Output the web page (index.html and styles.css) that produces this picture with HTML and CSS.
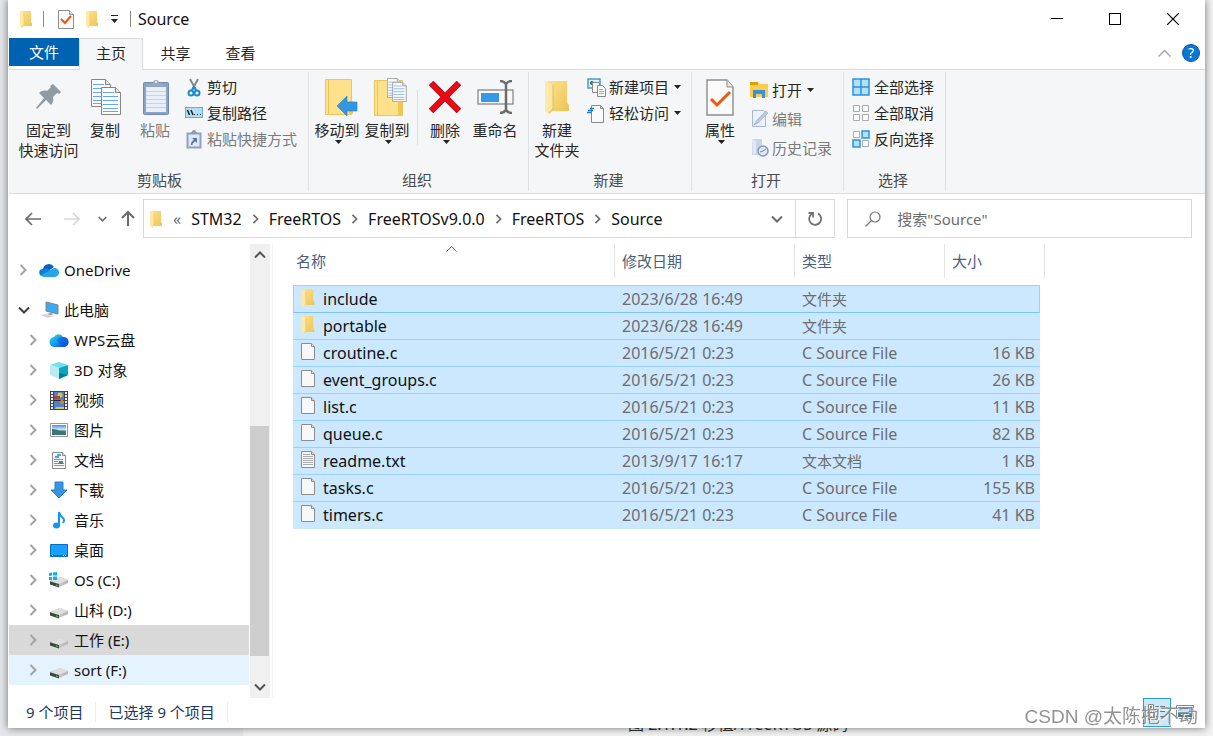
FILE: index.html
```html
<!DOCTYPE html>
<html lang="zh-CN">
<head>
<meta charset="utf-8">
<title>Source</title>
<link rel="stylesheet" href="styles.css">
</head>
<body>
<svg class="defs" aria-hidden="true">
  <defs>
    <linearGradient id="gf" x1="0" y1="0" x2="1" y2="1"><stop offset="0" stop-color="#ffe28f"/><stop offset="1" stop-color="#edc455"/></linearGradient>
    <linearGradient id="gd" x1="0" y1="0" x2="1" y2="0"><stop offset="0" stop-color="#8a8a8a"/><stop offset=".4" stop-color="#c9c9c9"/><stop offset="1" stop-color="#b4b4b4"/></linearGradient>
    <linearGradient id="gw" x1="0" y1="0" x2="1" y2="1"><stop offset="0" stop-color="#2ee0c0"/><stop offset=".5" stop-color="#159bf5"/><stop offset="1" stop-color="#0a3fe0"/></linearGradient>
    <linearGradient id="gp" x1="0" y1="0" x2="0" y2="1"><stop offset="0" stop-color="#4a8fe0"/><stop offset=".45" stop-color="#cfe6f7"/><stop offset=".6" stop-color="#5d8a7c"/><stop offset="1" stop-color="#3c6ea0"/></linearGradient>
    <symbol id="folder" viewBox="0 0 14 18"><path d="M2 1h10v11l1 1v3H3z" fill="url(#gf)"/><path d="M1 1l4 2v12l-2 3-2-2z" fill="#ffe9a8"/><path d="M5 3v12l-2 2" fill="none" stroke="#e9c25a" stroke-width=".6"/></symbol>
    <symbol id="file" viewBox="0 0 16 19"><path d="M1.500 1.500h10l3 3v13h-13z" fill="#f8f8f8" stroke="#8c8c8c"/><path d="M11.500 1.500v3h3" fill="#ddd" stroke="#8c8c8c"/></symbol>
    <symbol id="text" viewBox="0 0 16 19"><path d="M1.500 1.500h10l3 3v13h-13z" fill="#f8f8f8" stroke="#8c8c8c"/><path d="M11.500 1.500v3h3" fill="#ddd" stroke="#8c8c8c"/><path d="M3 4.500h7M3 6.500h10M3 8.500h10M3 10.500h10M3 12.500h10M3 14.500h10" stroke="#aaa"/></symbol>
    <symbol id="check" viewBox="0 0 28 37"><path d="M1 1h20l6 7v28H1z" fill="#fafafa" stroke="#8e8e8e" stroke-width="1.400"/><path d="M21 1v7h6" fill="#e6e6e6" stroke="#8e8e8e"/><path d="M5 20l6 6L24 13" fill="none" stroke="#f0570e" stroke-width="3"/></symbol>
    <symbol id="page" viewBox="0 0 20 28"><path d="M.500.500h14l5 5v22H.500z" fill="#fbfbfb" stroke="#858585"/><path d="M14.500.500v5h5" fill="#e4e4e4" stroke="#858585"/><path d="M2 5.500h11M2 9.500h15M2 13.500h15M2 17.500h15M2 21.500h15M2 24.500h15" stroke="#6aa5ee"/></symbol>
    <symbol id="next" viewBox="0 0 8 12"><path d="M1.500 1l5 5-5 5" fill="none" stroke="currentColor" stroke-width="2"/></symbol>
    <symbol id="down" viewBox="0 0 12 8"><path d="M1 1.500l5 5 5-5" fill="none" stroke="currentColor" stroke-width="2"/></symbol>
    <symbol id="drop" viewBox="0 0 7 4"><path d="M0 0h7L3.500 4z" fill="#222"/></symbol>
    <symbol id="drive" viewBox="0 0 20 12"><path d="M1 5l10-4 8 3v3l-9 4-9-3z" fill="url(#gd)"/><path d="M1 5l10-4 8 3-9 4z" fill="#dedede"/><path d="M1 5.500l9 2.500v3.500l-9-3z" fill="#3f4542"/><path d="M7 8.500l2 .500v1l-2-.500z" fill="#39e04b"/></symbol>
  </defs>
</svg>

<div class="backdrop" aria-hidden="true"><p class="behind">图 2.1.1.2 移植/FreeRTOS 源码</p></div>

<main class="window">
  <header class="titlebar">
    <svg class="ic-folder" aria-hidden="true"><use href="#folder"/></svg>
    <span class="bar"></span>
    <button class="quick" aria-label="属性"><svg width="16" height="19" viewBox="0 0 16 19"><path d="M.500.500h11l4 4v14H.500z" fill="#fafafa" stroke="#8e8e8e"/><path d="M11.500.500v4h4" fill="#e6e6e6" stroke="#8e8e8e"/><path d="M3 9l4 4 6-7" fill="none" stroke="#f0570e" stroke-width="2"/></svg></button>
    <button class="quick" aria-label="新建文件夹"><svg class="ic-folder"><use href="#folder"/></svg></button>
    <button class="quick more" aria-label="自定义快速访问工具栏"><svg width="7" height="8"><path d="M0 .500h7" stroke="#222"/><path d="M0 4h7L3.500 8z" fill="#222"/></svg></button>
    <span class="bar title-bar"></span>
    <h1>Source</h1>
    <div class="winbtns">
      <button aria-label="最小化"><svg width="12" height="12"><path d="M0 5.500h12" stroke="#000"/></svg></button>
      <button aria-label="最大化"><svg width="12" height="12"><rect x=".500" y=".500" width="11" height="11" fill="none" stroke="#000"/></svg></button>
      <button aria-label="关闭"><svg width="12" height="12"><path d="M0 0l12 12M12 0L0 12" stroke="#000" stroke-width="1.200"/></svg></button>
    </div>
  </header>

  <nav class="tabs">
    <button class="file-tab">文件</button>
    <button class="active">主页</button>
    <button>共享</button>
    <button>查看</button>
    <div class="tab-end">
      <button aria-label="最小化功能区"><svg width="13" height="8"><path d="M.500 7.500l6-6 6 6" fill="none" stroke="#a8a8a8" stroke-width="1.500"/></svg></button>
      <button class="help" aria-label="帮助">?</button>
    </div>
  </nav>

  <section class="ribbon">
    <div class="group clip">
      <div class="tools">
        <button class="big wide"><span class="pic"><svg width="26" height="28"><path d="M17 1l8 8-2 2-2-1-4 4c1 3 0 6-2 8l-5-5-9 9-1-1 8-10-5-5c2-2 5-3 8-2l4-4-1-1z" fill="#8f9aa3"/></svg></span>固定到<br>快速访问</button>
        <button class="big"><span class="pic copy"><svg width="32" height="38"><svg x="1" y="1" width="20" height="28"><use href="#page"/></svg><svg x="11" y="9" width="20" height="28"><use href="#page"/></svg></svg></span>复制</button>
        <button class="big off"><span class="pic copy"><svg width="28" height="38"><rect x="1.500" y="4.500" width="25" height="32" rx="1" fill="#8ba1c7" stroke="#7188b3"/><path d="M4 9h20v25H4z" fill="#e9eff9"/><path d="M4 13.500h20M4 17.500h20M4 21.500h20M4 25.500h20M4 29.500h20" stroke="#c5d3eb"/><path d="M7 5h4a3 3 0 0 1 6 0h4l2 3H5z" fill="#9da8bb"/><circle cx="14" cy="4" r="1" fill="#fff"/></svg></span>粘贴</button>
        <div class="list">
          <button><svg width="18" height="19"><path d="M5 1l6 11M13 1L7 12" stroke="#888" stroke-width="2"/><circle cx="6" cy="15" r="2.500" fill="none" stroke="#1c8bcb" stroke-width="2"/><circle cx="12" cy="15" r="2.500" fill="none" stroke="#1c8bcb" stroke-width="2"/><path d="M7 12l2-3 2 3" fill="none" stroke="#1c8bcb" stroke-width="2"/></svg>剪切</button>
          <button><svg width="18" height="12"><rect x=".500" y=".500" width="17" height="10" fill="#b2dff7" stroke="#6aabd6"/><path d="M2.500 3l2 5M6 3l2 5" stroke="#222" stroke-width="1.500"/><path d="M9 7.500h1M12 7.500h1M15 7.500h1" stroke="#222"/></svg>复制路径</button>
          <button class="off"><svg width="18" height="19"><rect x="2.500" y="3.500" width="13" height="14" fill="#dfe7f4" stroke="#8ea1c4" stroke-width="2"/><path d="M6 4V2h1a2 2 0 0 1 4 0h1v2z" fill="#8c9ab3"/><path d="M6 15c0-3 1-4 3-5L7 8h5v5l-1.500-1.500C8.500 12 7.500 13 7.500 15z" fill="#5875ab"/></svg>粘贴快捷方式</button>
        </div>
      </div>
      <p>剪贴板</p>
    </div>
    <div class="group organize">
      <div class="tools">
        <button class="big"><span class="pic push"><svg width="34" height="38"><path d="M1.500 1.500h26v35h-26z" fill="#ffe18b" stroke="#ebc55b"/><path d="M4.500 2v34" stroke="#ebc55b"/><path d="M25 23h4v13h-4z" fill="#edc558"/><path d="M13 28l10-10v6h10v9H23v5z" fill="#3496e3" stroke="#2a7fc9" stroke-width=".600"/></svg></span>移动到<svg class="arrow"><use href="#drop"/></svg></button>
        <button class="big"><span class="pic push"><svg width="36" height="40"><path d="M1.500 3.500h28v35h-28z" fill="#ffe18b" stroke="#ebc55b"/><path d="M4.500 4v34" stroke="#ebc55b"/><path d="M25 26q3-3 4 0v13h-4z" fill="#edc558"/><svg x="14" y="1" width="14" height="20"><use href="#page"/></svg><svg x="19" y="5" width="15" height="20"><use href="#page"/></svg></svg></span>复制到<svg class="arrow"><use href="#drop"/></svg></button>
        <span class="split"></span>
        <button class="big"><span class="pic"><svg width="32" height="32"><path d="M2 2l28 28M30 2L2 30" stroke="#a8121c" stroke-width="6.500"/><path d="M2.500 2.500l27 27M29.500 2.500l-27 27" stroke="#e90a15" stroke-width="5"/></svg></span>删除<svg class="arrow"><use href="#drop"/></svg></button>
        <button class="big"><span class="pic"><svg width="37" height="34"><rect x="1" y="10" width="35" height="14" fill="#fafafa" stroke="#888" stroke-width="1.300"/><path d="M4 13h18v9H4z" fill="#3698e8"/><path d="M23 1q4 0 6 3q2-3 6-3M29 3v28M23 33q4 0 6-3q2 3 6 3" fill="none" stroke="#6d6d6d" stroke-width="2.500"/></svg></span>重命名</button>
      </div>
      <p>组织</p>
    </div>
    <div class="group create">
      <div class="tools">
        <button class="big"><span class="pic"><svg width="28" height="38"><use href="#folder"/></svg></span>新建<br>文件夹</button>
        <div class="list">
          <button><svg width="19" height="19"><rect x="1" y="1" width="12" height="9" fill="#d7efff" stroke="#4f9bc5" stroke-width="1.500"/><circle cx="5" cy="5" r="2" fill="#40705c"/><path d="M5.500 4.500h7v10h-7z" fill="#f7f7f7" stroke="#888"/><path d="M10.500 7.500h5l3 3v8h-8z" fill="#fafafa" stroke="#888"/><path d="M12 11.500h4M12 13.500h5M12 15.500h5" stroke="#d79797"/></svg>新建项目<svg class="inline-arrow"><use href="#drop"/></svg></button>
          <button><svg width="19" height="19"><path d="M4.500 1.500h9l3 3v14h-12z" fill="#fafafa" stroke="#888"/><path d="M13.500 1.500v3h3" fill="none" stroke="#888"/><path d="M3 4.500h4M1 6.500h5M0 8.500h4" stroke="#2679c2" stroke-width="1.500"/></svg>轻松访问<svg class="inline-arrow"><use href="#drop"/></svg></button>
        </div>
      </div>
      <p>新建</p>
    </div>
    <div class="group open">
      <div class="tools">
        <button class="big"><span class="pic"><svg width="28" height="37"><use href="#check"/></svg></span>属性<svg class="arrow"><use href="#drop"/></svg></button>
        <div class="list loose">
          <button><svg width="19" height="18"><path d="M0 1h8l2 2h8v13H0z" fill="#fbcd4a"/><path d="M0 1h8v3H0z" fill="#dda000"/><path d="M3 17V9h12v8h-3v-4H6v4z" fill="#3493df"/></svg>打开<svg class="inline-arrow"><use href="#drop"/></svg></button>
          <button class="off"><svg width="19" height="19"><path d="M2.500 1.500h11l2 2v14h-13z" fill="#eef2f8" stroke="#a8b6d0"/><path d="M4 16l2-4L16 2l2 2L8 14z" fill="#bccbe0" stroke="#93a5c5" stroke-width=".600"/></svg>编辑</button>
          <button class="off"><svg width="19" height="19"><path d="M2 1h10v16H2z" fill="#c8d4e7"/><path d="M2 1l4 2v12l-3 2z" fill="#e2e9f4"/><circle cx="13" cy="13" r="5" fill="#e0e7f1" stroke="#8298bd" stroke-width="1.500"/><path d="M13 13l3-2M13 13l-3 1" stroke="#7087b0"/></svg>历史记录</button>
        </div>
      </div>
      <p>打开</p>
    </div>
    <div class="group select">
      <div class="tools">
        <div class="list">
          <button><svg width="18" height="18"><path d="M1 1h16v16H1zM9 1v16M1 9h16" fill="#b5e0fb" stroke="#2993df" stroke-width="1.500"/></svg>全部选择</button>
          <button><svg width="18" height="18"><path d="M1.500 1.500h6v6h-6zM10.500 1.500h6v6h-6zM1.500 10.500h6v6h-6zM10.500 10.500h6v6h-6z" fill="#fafafa" stroke="#aaa"/></svg>全部取消</button>
          <button><svg width="18" height="18"><path d="M1.500 1.500h6v6h-6zM10.500 10.500h6v6h-6z" fill="#fafafa" stroke="#aaa"/><path d="M10 1h7v7h-7zM1 10h7v7H1z" fill="#b5e0fb" stroke="#2993df" stroke-width="1.500"/></svg>反向选择</button>
        </div>
      </div>
      <p>选择</p>
    </div>
  </section>

  <nav class="navigation">
    <button class="n1" aria-label="后退"><svg width="16" height="14"><path d="M7 1L1 7l6 6M1 7h15" fill="none" stroke="#6b6b6b" stroke-width="1.700"/></svg></button>
    <button class="n1" aria-label="前进"><svg width="16" height="14"><path d="M9 1l6 6-6 6M15 7H0" fill="none" stroke="#d7d7d7" stroke-width="1.700"/></svg></button>
    <button class="n2" aria-label="最近浏览的位置"><svg width="9" height="6"><use href="#down"/></svg></button>
    <button class="n2 up" aria-label="上移"><svg width="14" height="17"><path d="M1 8l6-6 6 6M7 2v14" fill="none" stroke="#6b6b6b" stroke-width="2"/></svg></button>
    <div class="address">
      <svg class="ic-folder" aria-hidden="true"><use href="#folder"/></svg>
      <span class="chevs">«</span>
      <a href="#">STM32</a><svg class="crumb"><use href="#next"/></svg>
      <a href="#">FreeRTOS</a><svg class="crumb"><use href="#next"/></svg>
      <a href="#">FreeRTOSv9.0.0</a><svg class="crumb"><use href="#next"/></svg>
      <a href="#">FreeRTOS</a><svg class="crumb"><use href="#next"/></svg>
      <a href="#">Source</a>
      <button class="history" aria-label="以前的位置"><svg width="12" height="8"><use href="#down"/></svg></button>
      <button class="refresh" aria-label="刷新"><svg width="16" height="16"><path d="M11 2.500a6 6 0 1 1-6.500.500" fill="none" stroke="#707070" stroke-width="1.800"/><path d="M1.500 2H6v4.500" fill="none" stroke="#707070" stroke-width="1.800"/></svg></button>
    </div>
    <label class="search"><svg width="16" height="16"><circle cx="10" cy="6" r="5" fill="none" stroke="#777" stroke-width="1.200"/><path d="M6.500 9.500L.500 15.500" stroke="#777" stroke-width="1.200"/></svg><input type="text" aria-label="搜索" placeholder="搜索&quot;Source&quot;"></label>
  </nav>

  <div class="content">
    <ul class="tree">
      <li class="root onedrive"><svg class="tw"><use href="#next"/></svg><span class="ti"><svg width="20" height="14"><path d="M4 6a6 6 0 0 1 11-2l-7 5-5 4a4 4 0 0 1 1-7z" fill="#0a62b8"/><path d="M5 6q4-2 7 2l-8 5a3.500 3.500 0 0 1-.500-7z" fill="#0f7fd9"/><path d="M15 5a4.500 4.500 0 0 1 1 9H5q-2 0-3-2l8-4z" fill="#28a5ea"/></svg></span>OneDrive</li>
      <li class="root"><svg class="tw open-tw"><use href="#down"/></svg><span class="ti"><svg width="20" height="18"><path d="M7 1l12 3v9L7 10z" fill="#3baaf0" stroke="#748390"/><path d="M1 14l6-1 8 2-6 2z" fill="#d2d6d9"/><path d="M11 12l4 1-3 1-4-1z" fill="#8c9499"/></svg></span>此电脑</li>
      <li><svg class="tw"><use href="#next"/></svg><span class="ti"><svg width="20" height="16"><path d="M5 5a5 5 0 0 1 9 0 5 5 0 0 1 1 10H6A5 5 0 0 1 5 5z" fill="url(#gw)"/><path d="M8 8a6 6 0 0 1 6-3 5 5 0 0 1 1 10q-4-1-7-7z" fill="#0b50e2" opacity=".6"/></svg></span>WPS云盘</li>
      <li><svg class="tw"><use href="#next"/></svg><span class="ti"><svg width="20" height="18"><path d="M1 4l9-3 9 3-9 3z" fill="#6ee2ee"/><path d="M1 4l9 3v11l-9-4z" fill="#bcebef"/><path d="M19 4l-9 3v11l9-4z" fill="#0ca4c4"/><path d="M10 12l9 2-9 4z" fill="#007e9c"/></svg></span>3D 对象</li>
      <li><svg class="tw"><use href="#next"/></svg><span class="ti"><svg width="18" height="19"><path d="M0 0h18v19H0z" fill="#444"/><path d="M4 1h10v17H4z" fill="#4f7ed2"/><path d="M2 1v17M16 1v17" stroke="#eee" stroke-width="2" stroke-dasharray="2 1"/><circle cx="10" cy="4" r="2.500" fill="#e8c13e"/><path d="M4 5h6v3H4z" fill="#9b4c4b"/><path d="M4 9.500h10" stroke="#252b38"/><circle cx="12" cy="11" r="2" fill="#d38738"/><path d="M6 16h8v2H5z" fill="#dac64c"/></svg></span>视频</li>
      <li><svg class="tw"><use href="#next"/></svg><span class="ti"><svg width="18" height="14"><path d="M.500.500h17v13H.500z" fill="#fff" stroke="#999"/><path d="M2 2h14v10H2z" fill="url(#gp)"/><path d="M2 6q5 0 8 2l6 1v3H2z" fill="#3f7574"/></svg></span>图片</li>
      <li><svg class="tw"><use href="#next"/></svg><span class="ti"><svg width="16" height="19"><use href="#file"/><path d="M6 4h4M4 6h4" stroke="#1688dd" stroke-width="1.500"/><path d="M3 8.500h9M3 10.500h4M3 12.500h10M3 14.500h10" stroke="#4ba3df"/><path d="M8 10h4v3H8z" fill="#487d9d"/></svg></span>文档</li>
      <li><svg class="tw"><use href="#next"/></svg><span class="ti"><svg width="18" height="18"><path d="M5 1h8v8h4l-8 8-8-8h4z" fill="#3496e3" stroke="#2a7fc9"/></svg></span>下载</li>
      <li><svg class="tw"><use href="#next"/></svg><span class="ti"><svg width="14" height="18"><ellipse cx="4.500" cy="14.500" rx="3.500" ry="3" fill="#1397ee"/><path d="M7 15V1q1 4 4 6 2 2 0 5" fill="none" stroke="#1397ee" stroke-width="2"/></svg></span>音乐</li>
      <li><svg class="tw"><use href="#next"/></svg><span class="ti"><svg width="18" height="13"><path d="M.500.500h17v12H.500z" fill="#16a0ff" stroke="#0870ba"/><path d="M1 11.500h16" stroke="#0871c2"/><path d="M2 11.500h1M13 11.500h1M15 11.500h1" stroke="#fff"/></svg></span>桌面</li>
      <li><svg class="tw"><use href="#next"/></svg><span class="ti"><svg width="20" height="16"><svg y="4" width="20" height="12"><use href="#drive"/></svg><path d="M0 1l3-.500v3L0 4zM4 .500L8 0v3.500H4zM0 5h3v3H0zM4 4.500h4V8H4z" fill="#05b5ef"/></svg></span>OS (C:)</li>
      <li><svg class="tw"><use href="#next"/></svg><span class="ti low"><svg width="20" height="12"><use href="#drive"/></svg></span>山科 (D:)</li>
      <li class="current"><svg class="tw"><use href="#next"/></svg><span class="ti low"><svg width="20" height="12"><use href="#drive"/></svg></span>工作 (E:)</li>
      <li class="hover"><svg class="tw"><use href="#next"/></svg><span class="ti low"><svg width="20" height="12"><use href="#drive"/></svg></span>sort (F:)</li>
    </ul>
    <div class="scrollbar">
      <button aria-label="向上滚动"><svg class="flip" width="12" height="8"><use href="#down"/></svg></button>
      <div class="track"><div class="thumb"></div></div>
      <button aria-label="向下滚动"><svg width="12" height="8"><use href="#down"/></svg></button>
    </div>
    <section class="files">
      <table>
        <colgroup><col class="c-name"><col class="c-date"><col class="c-type"><col class="c-size"><col class="c-end"></colgroup>
        <thead><tr>
          <th><div>名称<svg class="sort" width="11" height="6"><path d="M.500 5.500l5-5 5 5" fill="none" stroke="#666"/></svg></div></th>
          <th><div>修改日期</div></th><th><div>类型</div></th><th colspan="2"><div class="last">大小</div></th>
        </tr></thead>
        <tbody>
          <tr class="focus"><td><svg class="fi"><use href="#folder"/></svg>include</td><td>2023/6/28 16:49</td><td class="zh">文件夹</td><td></td></tr>
          <tr><td><svg class="fi"><use href="#folder"/></svg>portable</td><td>2023/6/28 16:49</td><td class="zh">文件夹</td><td></td></tr>
          <tr><td><svg class="fi"><use href="#file"/></svg>croutine.c</td><td>2016/5/21 0:23</td><td>C Source File</td><td>16 KB</td></tr>
          <tr><td><svg class="fi"><use href="#file"/></svg>event_groups.c</td><td>2016/5/21 0:23</td><td>C Source File</td><td>26 KB</td></tr>
          <tr><td><svg class="fi"><use href="#file"/></svg>list.c</td><td>2016/5/21 0:23</td><td>C Source File</td><td>11 KB</td></tr>
          <tr><td><svg class="fi"><use href="#file"/></svg>queue.c</td><td>2016/5/21 0:23</td><td>C Source File</td><td>82 KB</td></tr>
          <tr><td><svg class="fi"><use href="#text"/></svg>readme.txt</td><td>2013/9/17 16:17</td><td class="zh">文本文档</td><td>1 KB</td></tr>
          <tr><td><svg class="fi"><use href="#file"/></svg>tasks.c</td><td>2016/5/21 0:23</td><td>C Source File</td><td>155 KB</td></tr>
          <tr><td><svg class="fi"><use href="#file"/></svg>timers.c</td><td>2016/5/21 0:23</td><td>C Source File</td><td>41 KB</td></tr>
        </tbody>
      </table>
    </section>
  </div>

  <footer class="status">
    <span>9 个项目</span><span>已选择 9 个项目</span>
    <div class="views">
      <button class="on" aria-label="详细信息"><svg width="18" height="16"><path d="M.500.500h5v15h-5z" fill="#fff" stroke="#888"/><path d="M2 3h2M2 8h2M2 13h2" stroke="#6d8a5a" stroke-width="2"/><path d="M7 2.500h4M12 2.500h5M7 7.500h4M12 7.500h5M7 12.500h4M12 12.500h5" stroke="#777"/></svg></button>
      <button aria-label="大图标"><svg width="18" height="14"><path d="M.500.500h17v13H.500z" fill="#fff" stroke="#888"/><path d="M2 2h14v10H2z" fill="url(#gp)"/></svg></button>
    </div>
  </footer>
</main>
<div class="watermark">CSDN @太陈抱不动</div>
</body>
</html>
```
FILE: styles.css
```css
* { box-sizing: border-box; }
body {
  margin: 0;
  height: 100vh;
  display: flex;
  overflow: hidden;
  background: #e6e7ea;
  font: 15px/20px "Noto Sans", "Noto Sans CJK SC", sans-serif;
  color: #111;
}
.defs { position: absolute; width: 0; height: 0; }
svg { flex: none; display: block; }
button {
  border: 0;
  padding: 0;
  background: none;
  font: inherit;
  color: inherit;
  display: flex;
  align-items: center;
  justify-content: center;
}
a { color: inherit; text-decoration: none; }
h1, p, ul { margin: 0; padding: 0; font-size: inherit; font-weight: 400; }

.backdrop {
  position: absolute;
  inset: 0 0 0 243px;
  background: #f2f2f2;
}
.behind {
  position: absolute;
  left: 385px;
  bottom: 2px;
  font-size: 16px;
  white-space: nowrap;
  color: #333;
}
.window {
  position: relative;
  flex: 1;
  min-width: 0;
  margin: 0 8px 8px;
  padding-left: 1px;
  display: flex;
  flex-direction: column;
  background: #fff;
  box-shadow: 0 0 8px #0008;
}

.titlebar {
  display: flex;
  align-items: center;
  height: 38px;
  padding: 0 3px 0 10px;
}
.ic-folder { width: 14px; height: 18px; }
.bar { width: 1px; height: 16px; margin: 0 8px 0 10px; background: #8a8a8a; }
.quick { width: 24px; height: 26px; }
.quick:first-of-type { width: 28px; }
.quick.more { width: 20px; }
.title-bar { margin: 0 7px 0 6px; }
h1 { font-size: 16px; line-height: 20px; }
.winbtns { display: flex; margin-left: auto; }
.winbtns button { width: 58px; height: 38px; }

.tabs {
  display: flex;
  height: 32px;
  border-bottom: 1px solid #dadbdc;
  color: #262626;
}
.tabs > button { width: 65px; padding-bottom: 2px; }
.tabs .file-tab { width: 70px; height: 28px; padding-bottom: 0; background: #0063b1; color: #fff; }
.tabs .active {
  width: 64px;
  height: 32px;
  padding-bottom: 4px;
  background: #f5f6f7;
  border: 1px solid #dadbdc;
  border-bottom: 0;
}
.tab-end { display: flex; align-items: center; gap: 11px; margin-left: auto; padding: 0 5px 2px 0; }
.tabs .help {
  width: 18px;
  height: 18px;
  border-radius: 50%;
  background: #0a76d8;
  border: 1px solid #075ba8;
  color: #fff;
  font-size: 14px;
}

.ribbon {
  display: flex;
  height: 124px;
  background: #f5f6f7;
  border-bottom: 1px solid #dadbdc;
  color: #262626;
}
.group {
  display: flex;
  flex-direction: column;
  justify-content: space-between;
  margin: 2px 0;
  padding-bottom: 1px;
  border-right: 1px solid #e0e1e2;
}
.group > p { padding-right: 6px; text-align: center; color: #4a4a4a; }
.tools { display: flex; align-items: flex-start; white-space: nowrap; }
.big {
  position: relative;
  display: block;
  width: 50px;
  padding-top: 5px;
  line-height: 20px;
}
.big.wide { width: 63px; }
.pic { display: flex; align-items: center; justify-content: center; height: 40px; margin-bottom: 3px; }
.push { padding-left: 8px; }
.copy { padding-left: 2px; }
.arrow { position: absolute; left: 23px; bottom: -4px; width: 7px; height: 4px; }
.list { display: flex; flex-direction: column; align-items: flex-start; padding: 2px 0 0 5px; }
.list button { height: 26px; gap: 4px; }
.list.loose { padding-top: 3px; }
.list.loose button { height: 29px; gap: 3px; }
.inline-arrow { width: 7px; height: 4px; margin-left: 2px; }
.off { color: #7b7b7b; }
.clip { width: 300px; padding-left: 8px; }
.organize { width: 220px; padding-left: 3px; }
.split { width: 1px; height: 55px; margin: 18px 2px 0 5px; background: #dedfe0; }
.create { width: 163px; padding-left: 3px; }
.create .list button { gap: 3px; }
.open { width: 152px; padding-left: 3px; }
.select { width: 102px; padding-left: 3px; }

.navigation {
  display: flex;
  align-items: center;
  height: 50px;
  padding: 0 13px 1px 4px;
  color: #6b6b6b;
}
.n1 { width: 39px; height: 38px; }
.n2 { width: 22px; height: 38px; }
.up { width: 30px; }
.address {
  flex: 2 1 0;
  display: flex;
  align-items: center;
  height: 39px;
  padding-left: 5px;
  border: 1px solid #d9d9d9;
  font-size: 16px;
  white-space: nowrap;
}
.address a { color: #111; }
.chevs { margin: 0 10px; }
.crumb { width: 7px; height: 10px; margin: 0 10px; }
.history { width: 37px; height: 37px; margin-left: auto; }
.refresh { width: 39px; height: 37px; border-left: 1px solid #d9d9d9; }
.search {
  flex: 1 1 0;
  display: flex;
  align-items: center;
  gap: 16px;
  height: 39px;
  margin-left: 12px;
  border: 1px solid #d9d9d9;
}
.search svg { margin-left: 17px; }
.search input { flex: 1; width: 0; min-width: 0; border: 0; padding: 0; outline: 0; font: inherit; background: none; }
.search input::placeholder { color: #6d6d6d; opacity: 1; }

.content { flex: 1; min-height: 0; display: flex; }
.tree { width: 240px; padding-top: 11px; list-style: none; overflow: hidden; }
.tree li { display: flex; align-items: center; height: 30px; padding-left: 19px; }
.tree .root { padding-left: 9px; }
.tree .onedrive { margin-bottom: 10px; }
.tw { width: 10px; height: 12px; color: #a3a3a3; }
.open-tw { width: 12px; height: 8px; margin-right: -2px; color: #404040; }
.ti { display: flex; justify-content: center; width: 20px; margin: 0 5px 0 11px; }
.low { padding-top: 5px; }
.tree .current { background: #d9d9d9; }
.tree .hover { background: #e5f3ff; }
.scrollbar { width: 21px; margin-left: 1px; display: flex; flex-direction: column; background: #f0f0f0; border-right: 1px solid #fff; color: #555; }
.scrollbar button { height: 22px; }
.flip { transform: rotate(180deg); }
.track { flex: 1; display: flex; flex-direction: column; justify-content: flex-end; }
.thumb { height: 56%; margin: 0 1px 20px 0; background: #cdcdcd; }
.files { flex: 1; min-width: 0; border-left: 1px solid #f2f2f2; margin-left: 1px; padding-left: 20px; }

table { table-layout: fixed; width: 752px; border-collapse: separate; border-spacing: 0; }
.c-name { width: 321px; }
.c-date { width: 180px; }
.c-type { width: 150px; }
.c-size { width: 96px; }
.c-end { width: 5px; }
th { padding: 0 0 7px; text-align: left; font-weight: 400; color: #4c607a; }
th div { height: 34px; line-height: 34px; padding-left: 7px; border-left: 1px solid #e4e4e4; }
th:first-child div { position: relative; padding-left: 2px; border-color: transparent; }
th .last { border-right: 1px solid #e4e4e4; }
.sort { position: absolute; left: 152px; top: 2px; }
td {
  height: 27px;
  padding: 0 0 0 8px;
  font-size: 16px;
  line-height: 24px;
  color: #6d6d6d;
  background: #cce8ff;
  border-bottom: 1px solid #99d1ff;
  white-space: nowrap;
}
td.zh { font-size: 15px; }
td:first-child { display: flex; align-items: center; gap: 7px; padding-left: 7px; color: #111; }
td:last-child { padding: 0 5px 0 0; text-align: right; }
tbody tr:last-child td { border-bottom-color: #cce8ff; }
.fi { width: 16px; height: 19px; margin-bottom: 3px; }
.focus td { height: 28px; border-top: 1px solid #99d1ff; border-bottom-color: #7bc3ff; }
.focus td:first-child { border-left: 1px solid #99d1ff; padding-left: 6px; }
.focus td:last-child { border-right: 1px solid #99d1ff; }

.status { display: flex; align-items: center; height: 30px; padding: 0 9px 2px 17px; color: #1e395b; }
.status span { padding-right: 12px; margin-right: 12px; border-right: 1px solid #eee; }
.views { display: flex; align-items: center; gap: 3px; margin-left: auto; }
.views button { width: 22px; height: 29px; }
.views .on { width: 28px; background: #cce8f6; border: 1px solid #26a0da; }
.watermark {
  position: fixed;
  right: 15px;
  bottom: 8px;
  font: 19px/22px "Liberation Sans", "Noto Sans CJK SC", sans-serif;
  color: #777c;
  text-shadow: 1px 1px 1px #fff;
  pointer-events: none;
}
```
